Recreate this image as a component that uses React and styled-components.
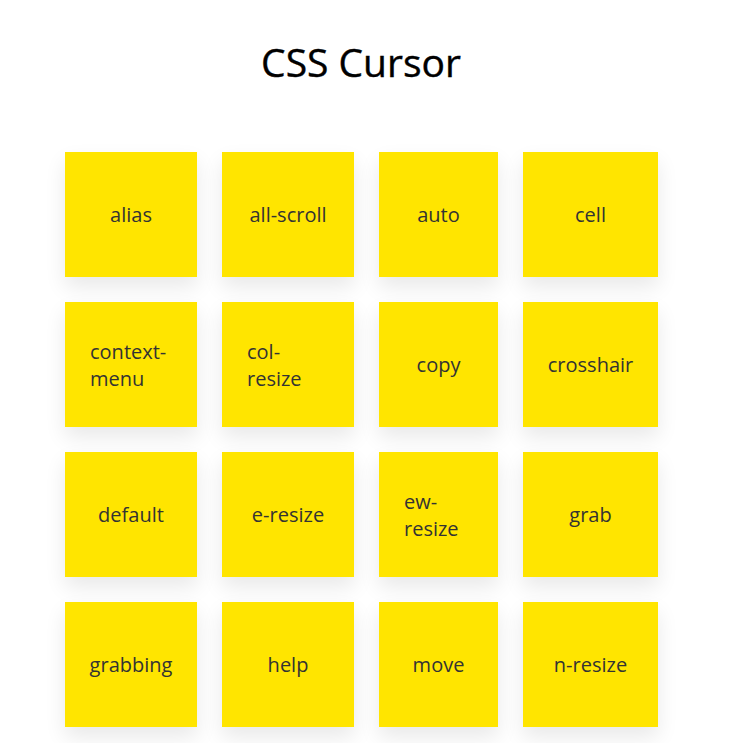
import styled, { createGlobalStyle } from 'styled-components';

const cursors = [
  'alias', 'all-scroll', 'auto', 'cell',
  'context-menu', 'col-resize', 'copy', 'crosshair',
  'default', 'e-resize', 'ew-resize', 'grab',
  'grabbing', 'help', 'move', 'n-resize',
];

export default function App() {
  return (
    <>
      <GlobalStyle />
      <Page>
        <Title>CSS Cursor</Title>
        <Grid>
          {cursors.map((name) => (
            <Card key={name} $cursor={name}>
              <Label>{name}</Label>
            </Card>
          ))}
        </Grid>
      </Page>
    </>
  );
}

const GlobalStyle = createGlobalStyle`
  body {
    margin: 0;
    background: #fff;
    font-family: "Open Sans", "Noto Sans", sans-serif;
  }
`;

const Page = styled.div`
  width: 600px;
  margin: 0 auto;
  padding-top: 35px;
  padding-bottom: 40px;
`;

const Title = styled.h1`
  margin: 0 0 64px 0;
  padding-right: 8px;
  text-align: center;
  font-size: 39px;
  font-weight: 500;
  line-height: normal;
  color: #000;
  -webkit-text-stroke: 0.4px #000;
`;

const Grid = styled.div`
  display: grid;
  grid-template-columns: 132px 132px 119px 135px;
  grid-auto-rows: 125px;
  gap: 25px;
`;

const Card = styled.div`
  display: flex;
  align-items: center;
  justify-content: center;
  padding: 0 25px;
  background: #ffe500;
  box-shadow: 0 10px 20px rgba(0, 0, 0, 0.09);
  cursor: ${(p) => p.$cursor};
`;

const Label = styled.span`
  font-size: 20px;
  line-height: 27px;
  color: #333;
`;
